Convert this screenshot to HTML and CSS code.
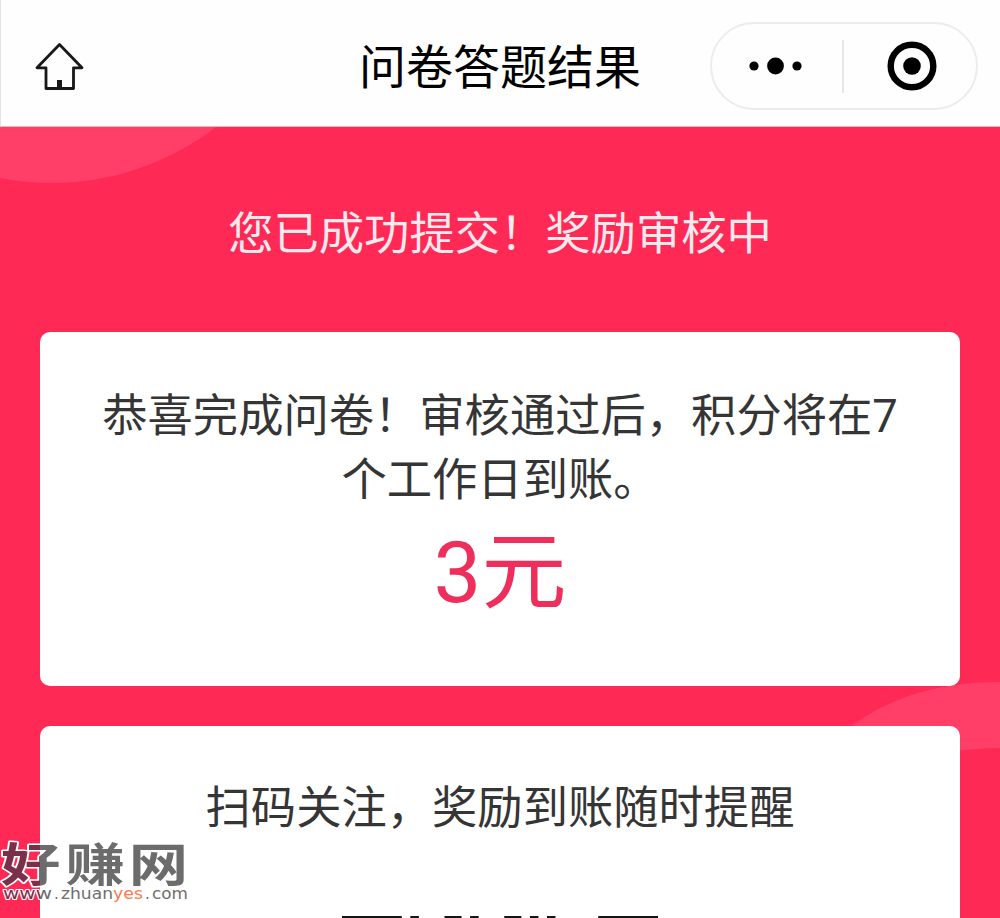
FILE: index.html
```html
<!DOCTYPE html>
<html lang="zh-CN">
<head>
  <meta charset="UTF-8" />
  <meta name="viewport" content="width=device-width, initial-scale=1.0"/>
  <title>问卷答题结果</title>
  <link rel="stylesheet" href="styles.css">
</head>
<body>
  <header>
    <svg class="home-icon" viewBox="0 0 50 50">
      <path d="M25.5 2.5 L48 25.8 H39.5 V46.5 H12 V25.8 H3 Z" fill="none" stroke="#181818" stroke-width="2.8" stroke-linejoin="round"/>
      <path d="M23 38 H28 V46 H23 Z" fill="#181818"/>
    </svg>
    <h1>问卷答题结果</h1>
    <div class="capsule">
      <svg class="dots" viewBox="0 0 54 20">
        <circle cx="5" cy="10" r="4.6"/>
        <circle cx="26.5" cy="10" r="8.4"/>
        <circle cx="48" cy="10" r="4.6"/>
      </svg>
      <span class="divider"></span>
      <svg class="target" viewBox="0 0 50 50">
        <circle cx="25" cy="25" r="21.3" fill="none" stroke="#000" stroke-width="6.4"/>
        <circle cx="25" cy="25" r="8.8"/>
      </svg>
    </div>
  </header>

  <main>
    <svg class="waves" viewBox="0 0 1000 791">
      <circle cx="52" cy="-212" r="268"/>
      <path d="M838 610 Q900 555 1000 555 V621 Q975 621 940 626 L900 640 Z"/>
    </svg>

    <p class="status">您已成功提交！奖励审核中</p>

    <section class="card result">
      <p>恭喜完成问卷！审核通过后，积分将在7个工作日到账。</p>
      <div class="reward">3元</div>
    </section>

    <section class="card follow">
      <p>扫码关注，奖励到账随时提醒</p>
      <svg class="qr" viewBox="0 0 37 7">
        <path d="M0 0H7V7H0Z M1 1V6H6V1Z M30 0H37V7H30Z M31 1V6H36V1Z" fill-rule="evenodd"/>
        <path d="M8 0h1v1h-1z M12 0h2v1h-2z M15 0h1v1h-1z M19 0h2v1h-2z M22 0h1v1h-1z M24 0h1v1h-1z"/>
      </svg>
    </section>
  </main>

  <svg class="watermark" viewBox="0 0 200 98">
    <defs>
      <linearGradient id="ink" gradientUnits="userSpaceOnUse" x1="0" y1="0" x2="200" y2="0">
        <stop offset="0.2" stop-color="#793048"/>
        <stop offset="0.2" stop-color="#6c6c6c"/>
      </linearGradient>
      <linearGradient id="ink-wide" gradientUnits="userSpaceOnUse" x1="0" y1="0" x2="150" y2="0">
        <stop offset="0.2" stop-color="#793048"/>
        <stop offset="0.2" stop-color="#6c6c6c"/>
      </linearGradient>
    </defs>
    <g transform="translate(1 61) scale(1.29 1)">
      <text class="wm-name" x="0" y="0">好</text>
      <text class="wm-name" x="50" y="0">赚</text>
      <text class="wm-name" x="99" y="0">网</text>
    </g>
    <text class="wm-url" x="3" y="78.5" textLength="49" lengthAdjust="spacingAndGlyphs">www</text>
    <text class="wm-url" x="54" y="78.5">.</text>
    <text class="wm-url" x="61" y="78.5" textLength="52" lengthAdjust="spacingAndGlyphs">zhuan</text>
    <text class="wm-url accent" x="113" y="78.5" textLength="30" lengthAdjust="spacingAndGlyphs">yes</text>
    <text class="wm-url" x="145" y="78.5">.</text>
    <text class="wm-url" x="152" y="78.5" textLength="36" lengthAdjust="spacingAndGlyphs">com</text>
  </svg>
</body>
</html>
```
FILE: styles.css
```css
* {
  box-sizing: border-box;
}
body {
  font-family: Roboto, "Noto Sans CJK SC", sans-serif;
  background-color: #ff2955;
  color: #353535;
  margin: 0;
  height: 918px;
  overflow: hidden;
  position: relative;
}
header {
  background-color: #fefefe;
  border-left: 1px solid #e4e4e4;
  border-bottom: 1px solid #f7b5c3;
  height: 127px;
  display: grid;
  grid-template-columns: 290px 1fr 290px;
  align-items: center;
  padding: 7px 22px 0 33px;
}
.home-icon {
  width: 50px;
  height: 50px;
}
h1 {
  margin: 2px 0 0;
  font-size: 47px;
  font-weight: 400;
  line-height: 60px;
  color: #000;
  text-align: center;
  white-space: nowrap;
  padding-right: 12px;
}
.capsule {
  justify-self: end;
  width: 268px;
  height: 88px;
  margin-bottom: 1px;
  border: 2px solid #ececec;
  border-radius: 44px;
  display: flex;
  align-items: center;
  padding-left: 37px;
}
.dots {
  width: 54px;
  height: 20px;
}
.divider {
  width: 2px;
  height: 53px;
  background-color: #e6e6e6;
  margin-left: 39px;
}
.target {
  width: 50px;
  height: 50px;
  margin-left: 43px;
}
main {
  height: 791px;
  overflow: hidden;
  position: relative;
  padding: 0 40px;
}
.waves {
  position: absolute;
  top: 0;
  left: 0;
  width: 1000px;
  height: 791px;
  fill: #ff3f68;
}
p {
  margin: 0;
  font-size: 45.3px;
  line-height: 64px;
  text-align: center;
}
.status {
  position: relative;
  color: #ffe9ee;
  padding: 76px 0 65px;
}
.card {
  position: relative;
  background-color: #fff;
  border-radius: 10px;
}
.result {
  height: 354px;
  padding: 53px 60px 0;
  margin-bottom: 40px;
}
.reward {
  color: #ee2f5b;
  font-size: 85px;
  line-height: 110px;
  text-align: center;
  padding-top: 5px;
}
.follow {
  height: 500px;
  padding-top: 51px;
}
.qr {
  display: block;
  width: 316px;
  margin: 75px auto 0;
  fill: #151515;
}
.watermark {
  position: absolute;
  left: 0;
  top: 820px;
  width: 200px;
  height: 98px;
}
.wm-name {
  font-family: "Noto Sans CJK SC", sans-serif;
  font-size: 46px;
  font-weight: 700;
  fill: url(#ink-wide);
  stroke: #fff;
  stroke-width: 3px;
  stroke-linejoin: round;
  paint-order: stroke;
}
.wm-url {
  font-family: "DejaVu Sans", sans-serif;
  font-size: 15px;
  fill: url(#ink);
  stroke: #fff;
  stroke-width: 2px;
  stroke-linejoin: round;
  paint-order: stroke;
}
.wm-url.accent {
  fill: #ff7a4d;
}
```
